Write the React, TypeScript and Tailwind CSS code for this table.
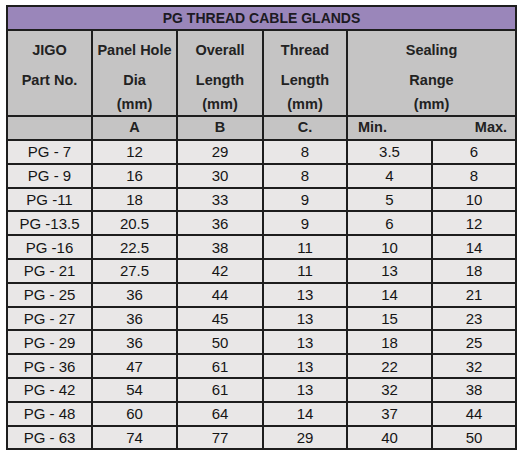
const rows = [
  ["PG - 7", "12", "29", "8", "3.5", "6"],
  ["PG - 9", "16", "30", "8", "4", "8"],
  ["PG -11", "18", "33", "9", "5", "10"],
  ["PG -13.5", "20.5", "36", "9", "6", "12"],
  ["PG -16", "22.5", "38", "11", "10", "14"],
  ["PG - 21", "27.5", "42", "11", "13", "18"],
  ["PG - 25", "36", "44", "13", "14", "21"],
  ["PG - 27", "36", "45", "13", "15", "23"],
  ["PG - 29", "36", "50", "13", "18", "25"],
  ["PG - 36", "47", "61", "13", "22", "32"],
  ["PG - 42", "54", "61", "13", "32", "38"],
  ["PG - 48", "60", "64", "14", "37", "44"],
  ["PG - 63", "74", "77", "29", "40", "50"],
];

const headers = [
  ["JIGO", "Part No.", ""],
  ["Panel Hole", "Dia", "(mm)"],
  ["Overall", "Length", "(mm)"],
  ["Thread", "Length", "(mm)"],
];

const cell = "border-2 border-[#1e1e1e] p-0 text-center";

export default function App() {
  return (
    <div className="min-h-[457px] w-[522px] bg-white pl-[6px] pt-[5px] font-['Liberation_Sans',Arial,sans-serif] text-[#151515]">
      <table className="w-[509px] table-fixed border-collapse">
        <colgroup>
          <col className="w-[85px]" />
          <col className="w-[85px]" />
          <col className="w-[86px]" />
          <col className="w-[84px]" />
          <col className="w-[85px]" />
          <col className="w-[84px]" />
        </colgroup>
        <thead>
          <tr className="h-[24px]">
            <th colSpan={6} className={`${cell} bg-[#9a86ba] text-[14px] font-bold text-[#1c1a22]`}>
              PG THREAD CABLE GLANDS
            </th>
          </tr>
          <tr className="h-[85px] bg-[#c5c4c4]">
            {headers.map((h, i) => (
              <th key={i} className={`${cell} align-top text-[14.5px] font-bold text-[#222]`}>
                <div className="flex flex-col items-center pt-[8px]">
                  <span className="h-[30px] leading-[22px]">{h[0]}</span>
                  <span className="h-[24px] leading-[22px]">{h[1]}</span>
                  <span className="leading-[22px]">{h[2]}</span>
                </div>
              </th>
            ))}
            <th colSpan={2} className={`${cell} align-top text-[14.5px] font-bold text-[#222]`}>
              <div className="flex flex-col items-center pt-[8px]">
                <span className="h-[30px] leading-[22px]">Sealing</span>
                <span className="h-[24px] leading-[22px]">Range</span>
                <span className="leading-[22px]">(mm)</span>
              </div>
            </th>
          </tr>
          <tr className="h-[24px] bg-[#c5c4c4] text-[14.5px] font-bold text-[#222]">
            <th className={cell}></th>
            <th className={cell}>A</th>
            <th className={cell}>B</th>
            <th className={cell}>C.</th>
            <th colSpan={2} className={cell}>
              <div className="flex justify-between pl-[10px] pr-[8px]">
                <span>Min.</span>
                <span>Max.</span>
              </div>
            </th>
          </tr>
        </thead>
        <tbody className="bg-[#e9e7e7] text-[15px]">
          {rows.map((r, i) => (
            <tr key={i} className="h-[23.8px]">
              {r.map((v, j) => (
                <td key={j} className={`${cell} leading-[19px]`}>
                  {v}
                </td>
              ))}
            </tr>
          ))}
        </tbody>
      </table>
    </div>
  );
}
